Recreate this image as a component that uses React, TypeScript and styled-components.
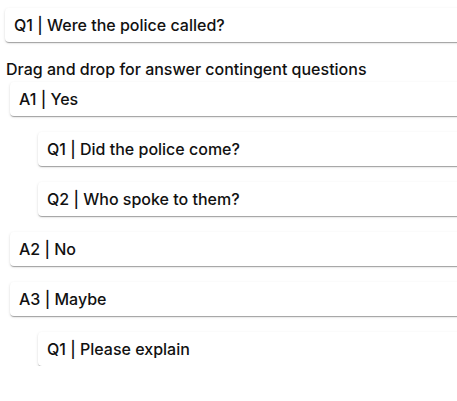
import styled, { createGlobalStyle } from 'styled-components'

const GlobalStyle = createGlobalStyle`
  html, body {
    margin: 0;
    padding: 0;
    background: #fff;
    overflow: hidden;
  }
  body {
    font-family: Inter, "Noto Sans", "Liberation Sans", sans-serif;
    color: #111;
  }
`

const Page = styled.div`
  padding: 8px 0 0 5px;
  width: 460px;
`

const Card = styled.div<{ $indent?: number }>`
  display: flex;
  align-items: center;
  box-sizing: border-box;
  height: 34px;
  margin-left: ${({ $indent }) => $indent ?? 0}px;
  padding-left: 9px;
  background: #fff;
  border-radius: 4px;
  box-shadow: 0 2px 1px -1px rgba(0, 0, 0, 0.2), 0 1px 1px 0 rgba(0, 0, 0, 0.14),
    0 1px 3px 0 rgba(0, 0, 0, 0.12);
  font-size: 16px;
  font-weight: 500;
`

const Heading = styled.div`
  margin: 17px 0 3px 1px;
  line-height: 20px;
  font-size: 16px;
  font-weight: 500;
`

const List = styled.div`
  display: flex;
  flex-direction: column;
  gap: 16px;
`

const answers = [
  { label: 'A1 | Yes', questions: ['Q1 | Did the police come?', 'Q2 | Who spoke to them?'] },
  { label: 'A2 | No', questions: [] },
  { label: 'A3 | Maybe', questions: ['Q1 | Please explain'] },
]

export default function App() {
  return (
    <>
      <GlobalStyle />
      <Page>
        <Card>Q1 | Were the police called?</Card>
        <Heading>Drag and drop for answer contingent questions</Heading>
        <List>
          {answers.flatMap((a) => [
            <Card key={a.label} $indent={5}>{a.label}</Card>,
            ...a.questions.map((q) => (
              <Card key={a.label + q} $indent={33}>{q}</Card>
            )),
          ])}
        </List>
      </Page>
    </>
  )
}
